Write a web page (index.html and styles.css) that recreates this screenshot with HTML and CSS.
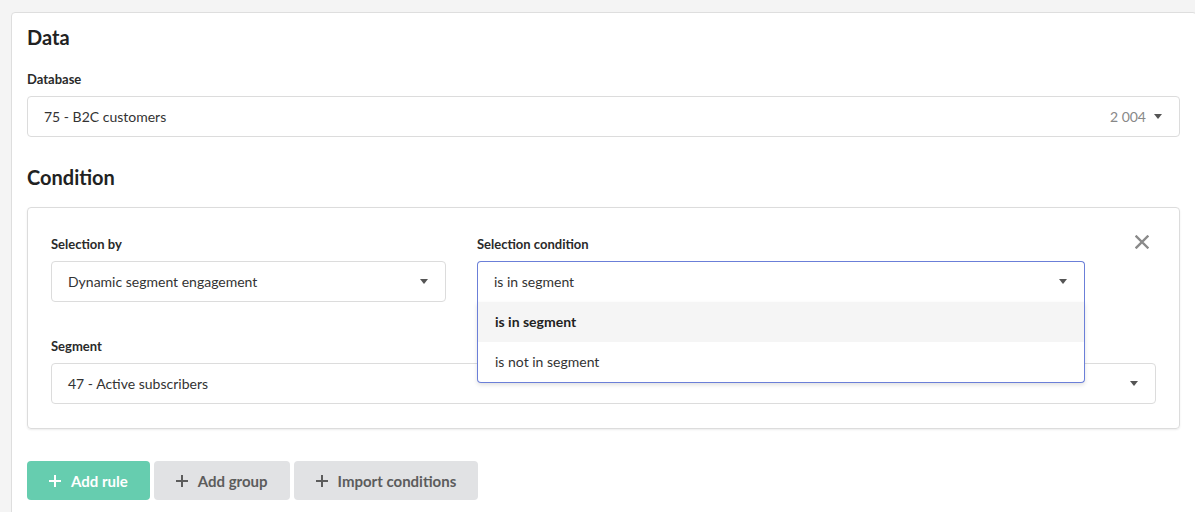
FILE: index.html
```html
<!DOCTYPE html>
<html lang="en">
<head>
<meta charset="utf-8">
<title>Data &amp; Condition</title>
<link rel="stylesheet" href="styles.css">
</head>
<body>
<div class="page">
  <section class="card">
    <h2 class="heading">Data</h2>
    <div class="field field-db">
      <label class="label">Database</label>
      <div class="select">
        <span class="value">75 - B2C customers</span>
        <span class="meta">2 004</span>
        <span class="caret"></span>
      </div>
    </div>

    <h2 class="heading heading-condition">Condition</h2>
    <div class="rule-box">
      <div class="rule-row">
        <div class="field col-by">
          <label class="label">Selection by</label>
          <div class="select">
            <span class="value">Dynamic segment engagement</span>
            <span class="caret"></span>
          </div>
        </div>
        <div class="field col-cond">
          <label class="label">Selection condition</label>
          <div class="select-wrap">
            <div class="select select-open">
              <span class="value">is in segment</span>
              <span class="caret"></span>
            </div>
            <ul class="menu">
              <li class="option option-active">is in segment</li>
              <li class="option">is not in segment</li>
            </ul>
          </div>
        </div>
        <div class="col-close">
          <svg class="close" width="14" height="14" viewBox="0 0 14 14" aria-hidden="true">
            <path d="M1.5 1.5 L12.5 12.5 M12.5 1.5 L1.5 12.5" stroke="#8a8a8a" stroke-width="2.4" stroke-linecap="square" fill="none"/>
          </svg>
        </div>
      </div>
      <div class="field field-segment">
        <label class="label">Segment</label>
        <div class="select">
          <span class="value">47 - Active subscribers</span>
          <span class="caret"></span>
        </div>
      </div>
    </div>

    <div class="actions">
      <button class="btn btn-primary"><span class="plus"></span>Add rule</button>
      <button class="btn btn-secondary"><span class="plus"></span>Add group</button>
      <button class="btn btn-secondary"><span class="plus"></span>Import conditions</button>
    </div>
  </section>
</div>
</body>
</html>
```

FILE: styles.css
```css
* { box-sizing: border-box; }

html, body {
  margin: 0;
  padding: 0;
  background: #f4f4f4;
  overflow: hidden;
}

body {
  font-family: Lato, "Noto Sans", "Liberation Sans", sans-serif;
  font-size: 14px;
  color: #333;
}

.page {
  padding: 12px 0 0 11px;
}

.card {
  width: 1186px;
  min-height: 520px;
  background: #fff;
  border: 1px solid #dedede;
  border-radius: 4px;
  padding: 12px 16px 0 15px;
}

.heading {
  margin: 0;
  font-size: 20px;
  line-height: 24px;
  font-weight: 700;
  color: #222;
}

.heading-condition {
  margin-top: 28px;
}

.field {
  margin-top: 20px;
}

.field-db {
  margin-top: 21px;
}

.label {
  display: block;
  font-size: 13px;
  line-height: 18px;
  font-weight: 700;
  color: #2a2a2a;
  margin-bottom: 8px;
}

.select {
  height: 41px;
  display: flex;
  align-items: center;
  padding: 0 16px 1px;
  border: 1px solid #dcdcdc;
  border-radius: 4px;
  background: #fff;
  color: #333;
}

.value { flex: 1; }

.meta {
  color: #888;
  margin-right: 8px;
}

.caret {
  width: 0;
  height: 0;
  border-left: 4.5px solid transparent;
  border-right: 4.5px solid transparent;
  border-top: 5px solid #555;
  margin-right: 1px;
}

.rule-box {
  margin-top: 18px;
  border: 1px solid #dcdcdc;
  border-radius: 4px;
  box-shadow: 0 1px 2px rgba(0, 0, 0, 0.08);
  padding: 7px 23px 24px 23px;
}

.rule-row {
  display: flex;
}

.col-by {
  flex: 0 0 395px;
}

.col-cond {
  flex: 0 0 608px;
  margin-left: 31px;
}

.col-close {
  flex: 1;
  display: flex;
  justify-content: flex-end;
  padding-top: 20px;
  padding-right: 7px;
}

.close { display: block; }

.select-wrap {
  position: relative;
}

.select-open {
  border-color: #6b7fd8;
  border-bottom: none;
  border-radius: 4px 4px 0 0;
}

.menu {
  position: absolute;
  left: 0;
  right: 0;
  top: 41px;
  margin: 0;
  padding: 0;
  list-style: none;
  background: #fff;
  border: 1px solid #6b7fd8;
  border-top: none;
  border-radius: 0 0 4px 4px;
  box-shadow: 0 2px 4px rgba(0, 0, 0, 0.12);
  z-index: 2;
}

.option {
  height: 40px;
  line-height: 39px;
  padding: 0 17px;
  color: #333;
}

.option-active {
  background: #f5f5f5;
  font-weight: 700;
  color: #222;
}

.field-segment {
  margin-top: 35px;
}

.actions {
  display: flex;
  gap: 4px;
  margin-top: 32px;
}

.btn {
  height: 39px;
  border: none;
  border-radius: 4px;
  display: flex;
  align-items: center;
  padding: 0 22px 0 22px;
  font-family: inherit;
  font-size: 15px;
  font-weight: 700;
  cursor: pointer;
}

.btn-primary {
  background: #66cdaf;
  color: #fff;
}

.btn-secondary {
  background: #e1e2e4;
  color: #5c5c5c;
}

.plus {
  position: relative;
  width: 12px;
  height: 12px;
  margin-right: 10px;
}

.plus::before,
.plus::after {
  content: "";
  position: absolute;
  background: currentColor;
}

.plus::before {
  left: 0;
  right: 0;
  top: 5px;
  height: 2px;
}

.plus::after {
  top: 0;
  bottom: 0;
  left: 5px;
  width: 2px;
}
```
